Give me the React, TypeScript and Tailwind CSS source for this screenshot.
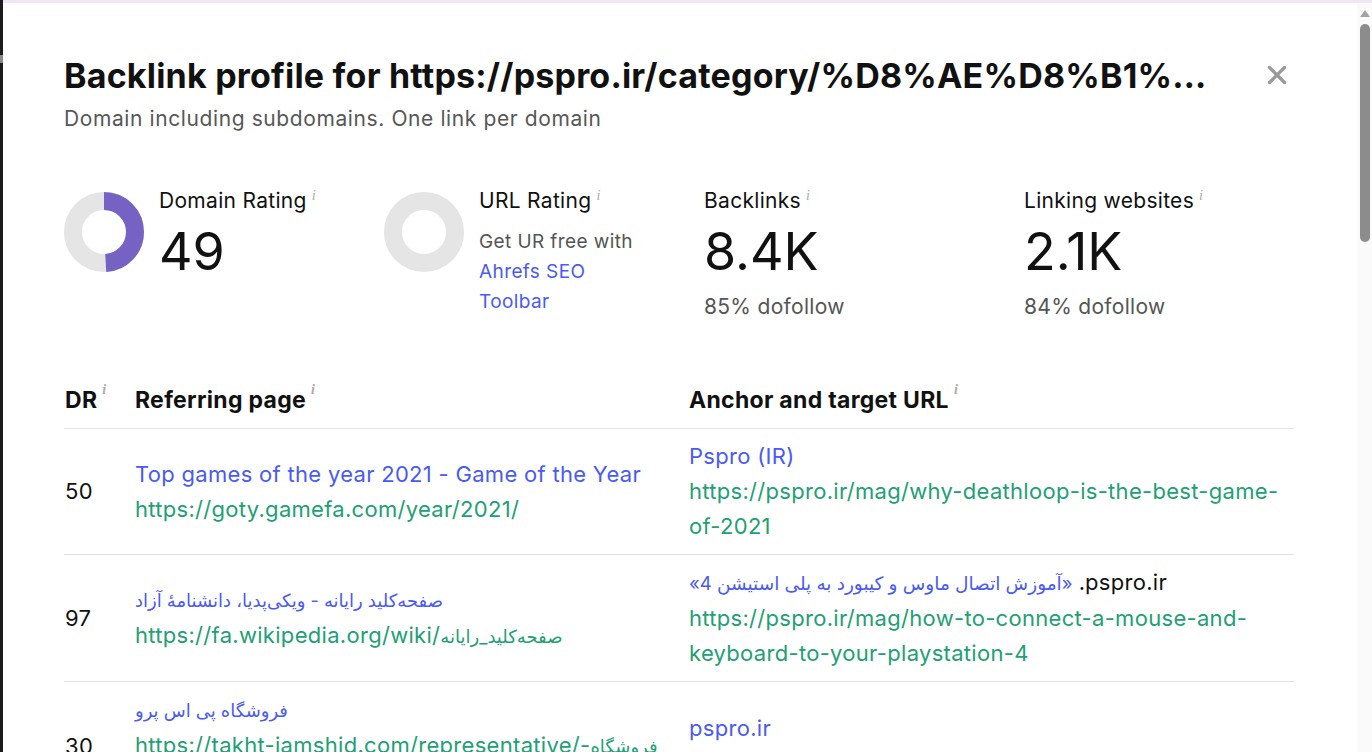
import { X } from 'lucide-react'

const BLUE = 'text-[#4a5af6]'
const GREEN = 'text-[#21a074]'

function Info() {
  return (
    <span className="ml-[5px] align-top font-['Liberation_Serif',serif] text-[14px] italic leading-none tracking-normal text-[#ababab]">
      i
    </span>
  )
}

// donut drawn as svg, value 0..100
function Donut({ value }: { value: number }) {
  const r = 31
  const c = 2 * Math.PI * r
  return (
    <svg width="80" height="80" viewBox="0 0 80 80" className="mt-[3px] shrink-0">
      <circle cx="40" cy="40" r={r} fill="none" stroke="#e5e5e5" strokeWidth="18" />
      {value > 0 && (
        <circle
          cx="40"
          cy="40"
          r={r}
          fill="none"
          stroke="#7562c2"
          strokeWidth="18"
          strokeDasharray={`${(c * value) / 100} ${c}`}
          transform="rotate(-90 40 40)"
        />
      )}
    </svg>
  )
}

const rows = [
  {
    dr: '50',
    title: <span>Top games of the year 2021 - Game of the Year</span>,
    url: <span>https://goty.gamefa.com/year/2021/</span>,
    anchor: <span className={BLUE}>Pspro (IR)</span>,
    target: 'https://pspro.ir/mag/why-deathloop-is-the-best-game-of-2021',
  },
  {
    dr: '97',
    title: (
      <span dir="rtl" className="text-[18px] tracking-normal">
        صفحه‌کلید رایانه - ویکی‌پدیا، دانشنامهٔ آزاد
      </span>
    ),
    url: (
      <span>
        https://fa.wikipedia.org/wiki/
        <span dir="rtl" className="text-[18px] tracking-normal">
          صفحه‌کلید_رایانه
        </span>
      </span>
    ),
    anchor: (
      <span>
        <span dir="rtl" className={`${BLUE} text-[18.5px] tracking-normal`}>
          «آموزش اتصال ماوس و کیبورد به پلی استیشن 4»
        </span>
        <span className="text-[#111]"> .pspro.ir</span>
      </span>
    ),
    target: 'https://pspro.ir/mag/how-to-connect-a-mouse-and-keyboard-to-your-playstation-4',
  },
  {
    dr: '30',
    title: (
      <span dir="rtl" className="text-[18px] tracking-normal">
        فروشگاه پی اس پرو
      </span>
    ),
    url: (
      <span>
        https://takht-jamshid.com/representative/-
        <span dir="rtl" className="text-[18px] tracking-normal">
          فروشگاه
        </span>{' '}
        <span dir="rtl" className="text-[18px] tracking-normal">
          پی-اس-پرو/
        </span>
      </span>
    ),
    anchor: <span className={BLUE}>pspro.ir</span>,
    target: 'https://pspro.ir/',
  },
]

export default function App() {
  return (
    <div className="flex h-screen overflow-hidden bg-white font-['Inter','DejaVu_Sans',sans-serif] text-[#111]">
      <div className="flex w-[3px] shrink-0 flex-col bg-[#1c1c1c]">
        <div className="mt-[55px] h-[8px] bg-[#8a8a8a]" />
      </div>
      <div className="flex min-w-0 flex-1 flex-col">
        <div className="h-[3px] shrink-0 bg-[#f1e6f5]" />
        <div className="flex min-h-0 flex-1">
          {/* modal content */}
          <div className="min-w-0 flex-1 pl-[61px] pr-[60px] pt-[52px]">
            <div className="flex w-[1230px] items-start justify-between">
              <h1 className="max-w-[1158px] truncate text-[34px] font-bold leading-[42px] tracking-[0.2px]">
                Backlink profile for https://pspro.ir/category/%D8%AE%D8%B1%DB%8C%D8%AF-%D8%A8%D8%A7%D8%B2%DB%8C/
              </h1>
              <X size={30} strokeWidth={2.6} className="mr-[2px] mt-[5px] text-[#9a9a9a]" />
            </div>
            <p className="mt-[8px] text-[21px] leading-[28px] tracking-[0.6px] text-[#575757]">
              Domain including subdomains. One link per domain
            </p>

            {/* stats */}
            <div className="mt-[56px] flex">
              <div className="flex w-[320px] gap-[15px]">
                <Donut value={49} />
                <div>
                  <div className="text-[21px] leading-[24px] tracking-[0.3px]">
                    Domain Rating
                    <Info />
                  </div>
                  <div className="mt-[9px] text-[52px] leading-[60px]">49</div>
                </div>
              </div>
              <div className="flex w-[320px] gap-[15px]">
                <Donut value={0} />
                <div>
                  <div className="text-[21px] leading-[24px] tracking-[0.3px]">
                    URL Rating
                    <Info />
                  </div>
                  <div className="mt-[14px] text-[19px] leading-[30px] tracking-[0.4px] text-[#555]">
                    Get UR free with
                    <br />
                    <span className={BLUE}>
                      Ahrefs SEO
                      <br />
                      Toolbar
                    </span>
                  </div>
                </div>
              </div>
              <div className="w-[320px]">
                <div className="text-[21px] leading-[24px] tracking-[0.3px]">
                  Backlinks
                  <Info />
                </div>
                <div className="mt-[9px] text-[52px] leading-[60px]">8.4K</div>
                <div className="mt-[11px] text-[21px] leading-[28px] tracking-[0.3px] text-[#555]">
                  85% dofollow
                </div>
              </div>
              <div className="w-[270px]">
                <div className="text-[21px] leading-[24px] tracking-[0.3px]">
                  Linking websites
                  <Info />
                </div>
                <div className="mt-[9px] text-[52px] leading-[60px]">2.1K</div>
                <div className="mt-[11px] text-[21px] leading-[28px] tracking-[0.3px] text-[#555]">
                  84% dofollow
                </div>
              </div>
            </div>

            {/* table */}
            <div className="mt-[52px] w-[1230px]">
              <div className="flex h-[56px] items-center border-b border-[#e3e3e3] text-[23px] font-bold tracking-[0.3px]">
                <div className="w-[71px] pl-[1px]">
                  DR
                  <Info />
                </div>
                <div className="w-[554px]">
                  Referring page
                  <Info />
                </div>
                <div className="flex-1">
                  Anchor and target URL
                  <Info />
                </div>
              </div>
              {rows.map((row) => (
                <div
                  key={row.dr}
                  className="flex items-center border-b border-[#e3e3e3] py-[10px] text-[22px] leading-[35px] tracking-[0.3px]"
                >
                  <div className="w-[71px] pl-[1px]">{row.dr}</div>
                  <div className="w-[554px] pr-[8px]">
                    <div className={BLUE}>{row.title}</div>
                    <div className={`${GREEN} break-words`}>{row.url}</div>
                  </div>
                  <div className="min-w-0 flex-1 pr-[5px]">
                    <div>{row.anchor}</div>
                    <div className={GREEN}>{row.target}</div>
                  </div>
                </div>
              ))}
            </div>
          </div>

          {/* scrollbar */}
          <div className="flex w-[15px] shrink-0 flex-col items-center bg-[#fafafa]">
            <svg width="10" height="8" viewBox="0 0 10 8" className="mt-[7px]">
              <path d="M5 0 L10 7 L0 7 Z" fill="#a3a3a3" />
            </svg>
            <div className="mt-[6px] h-[218px] w-[10px] rounded-full bg-[#8c8c8c]" />
          </div>
        </div>
      </div>
    </div>
  )
}
